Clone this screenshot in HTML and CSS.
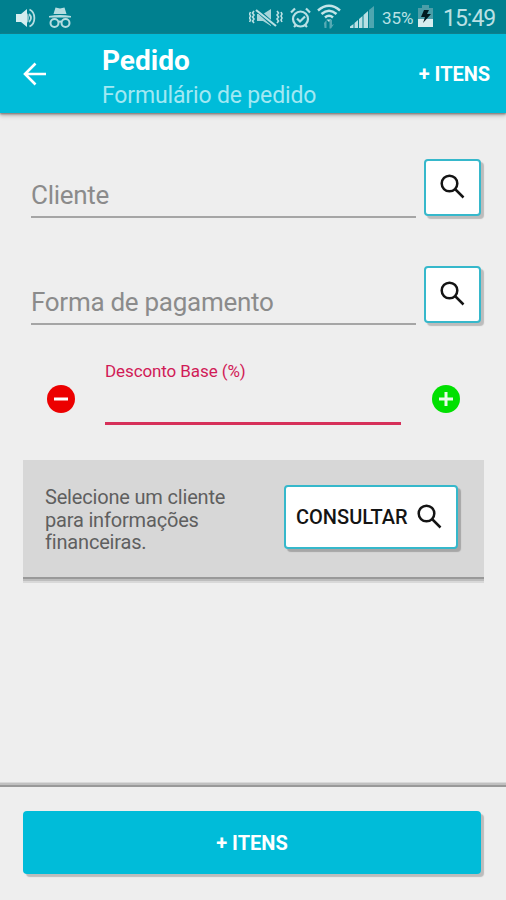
FILE: index.html
```html
<!DOCTYPE html>
<html lang="pt-BR">
<head>
<meta charset="utf-8">
<title>Pedido</title>
<link rel="stylesheet" href="styles.css">
</head>
<body>
<div class="statusbar">
  <svg class="i-sound" width="20" height="20" viewBox="0 0 20 20"><path fill="#d5edef" d="M0 6h5l6-5v18l-6-5H0z"/><path fill="#8fc9cf" d="M11 5q4 5 0 10z"/><path fill="none" stroke="#b5dde1" stroke-width="1.800" d="M13 6q4 4 0 8M13.500 1.500c6.500 3 6.500 14 0 17"/></svg>
  <svg class="i-incognito" width="22" height="22" viewBox="0 0 22 22"><path fill="#b5dde1" d="M6.500 0.500l4.500 1 4.500-1L17.500 7h-13zM0 9q11-2 22 0v1.500H0z"/><g fill="none" stroke="#b5dde1" stroke-width="2"><circle cx="5.500" cy="16" r="4"/><circle cx="16.500" cy="16" r="4"/><path d="M9.500 15q1.500-1 3 0"/></g></svg>
  <span class="grow"></span>
  <svg class="i-mute" width="34" height="20" viewBox="0 0 34 20"><path fill="#a7d5da" d="M8 6h6l8-5v17l-8-5H8z"/><path stroke="#00808f" stroke-width="4" d="M7 1l20 18"/><g fill="none" stroke="#b9e0e4" stroke-width="1.600"><path stroke-width="2.200" d="M7 2l20 16"/><path d="M5 3L3.500 5 5 7 3.500 9 5 11 3.500 13 5 15M1.500 4L.5 6l1 2-1 2 1 2-1 2M28 3l1.500 2L28 7l1.500 2L28 11l1.500 2L28 15M32 4l1 2-1 2 1 2-1 2 1 2"/></g></svg>
  <svg class="i-alarm" width="21" height="22" viewBox="0 0 21 22"><g fill="none" stroke="#b9e0e4" stroke-width="2.200"><circle cx="10.500" cy="13" r="7.500"/><path d="M7 12.500l3 3 5-5M1 6.500l4-4M20 6.500l-4-4M4 21l2-2M17 21l-2-2"/></g></svg>
  <svg class="i-wifi" width="24" height="25" viewBox="0 0 24 25"><g fill="none" stroke="#c3e5e8" stroke-width="2.500"><path d="M1 6.500Q12-3 23 6.500M4.500 10Q12 3.500 19.500 10M8 13.500q4-3.500 8 0"/></g><path fill="#c3e5e8" d="M9.500 15.500h5L12 18z"/><path fill="#55aab4" d="M7 19l2.500-3v8h-2zM12.500 16H15v5l2-1-3 4.500h-1.500z"/></svg>
  <svg class="i-signal" width="24" height="22" viewBox="0 0 24 22"><path fill="#b9e0e4" d="M0 20.500L3.500 18v4H0zM4.500 17L8 14v8H4.500zM9 13l3.500-3v12H9zM13.500 9L18 5v17h-4.500z"/><path fill="#4ea6b0" d="M19 4l5-4v22h-5z"/></svg>
  <span class="percent">35%</span>
  <svg class="i-battery" width="15" height="22" viewBox="0 0 15 22"><path fill="#4b9ea8" d="M4 0h7v3h4v11H0V3h4z"/><path fill="#d8edef" d="M0 14h15v8H0z"/><path fill="#001b20" d="M6 5h5l-2 4h4L5 18l2-6H3z"/></svg>
  <span class="clock">15:49</span>
</div>
<header class="appbar">
  <svg class="back" width="24" height="24" viewBox="0 0 24 24"><path fill="none" stroke="#fff" stroke-width="2.600" d="M12.500 1.500L2 12l10.500 10.500M2 12h21"/></svg>
  <div class="titles">
    <h1>Pedido</h1>
    <p>Formulário de pedido</p>
  </div>
  <span class="action">+ ITENS</span>
</header>
<main>
  <div class="row">
    <div class="field"><span>Cliente</span></div>
    <button class="search"><svg width="25" height="25" viewBox="0 0 25 25"><g fill="none" stroke="#141414" stroke-width="2.500"><circle cx="9.500" cy="9.500" r="7.800"/><path d="M15 15l8.500 8.500"/></g></svg></button>
  </div>
  <div class="row">
    <div class="field"><span>Forma de pagamento</span></div>
    <button class="search"><svg width="25" height="25" viewBox="0 0 25 25"><g fill="none" stroke="#141414" stroke-width="2.500"><circle cx="9.500" cy="9.500" r="7.800"/><path d="M15 15l8.500 8.500"/></g></svg></button>
  </div>
  <div class="discount">
    <svg width="28" height="28" viewBox="0 0 28 28"><circle cx="14" cy="14" r="14" fill="#ec0000"/><path stroke="#fff" stroke-width="3" d="M7 14h14"/></svg>
    <div class="discount-field"><span>Desconto Base (%)</span></div>
    <svg width="28" height="28" viewBox="0 0 28 28"><circle cx="14" cy="14" r="14" fill="#00e000"/><path stroke="#e9fbe9" stroke-width="3" d="M7 14h14M14 7v14"/></svg>
  </div>
  <section class="card">
    <p>Selecione um cliente<br>para informações<br>financeiras.</p>
    <button class="consult"><span>CONSULTAR</span><svg width="25" height="25" viewBox="0 0 25 25"><g fill="none" stroke="#141414" stroke-width="2.500"><circle cx="9.500" cy="9.500" r="7.800"/><path d="M15 15l8.500 8.500"/></g></svg></button>
  </section>
</main>
<footer><button class="primary">+ ITENS</button></footer>
</body>
</html>
```
FILE: styles.css
```css
* { box-sizing: border-box; }
body {
  margin: 0;
  height: 900px;
  display: flex;
  flex-direction: column;
  overflow: hidden;
  background: #eee;
  font-family: Roboto, "Liberation Sans", sans-serif;
}
svg { display: block; flex: none; }
h1, p { margin: 0; }
button { font-family: inherit; padding: 0; }
.statusbar {
  height: 34px;
  flex: none;
  display: flex;
  align-items: flex-start;
  padding: 0 11px 0 16px;
  background: #00808f;
  color: #b9e0e4;
  white-space: nowrap;
}
.grow { flex: 1; }
.i-sound { margin-top: 8px; }
.i-incognito { margin: 7px 0 0 13px; }
.i-mute { margin: 8px 7px 0 0; }
.i-alarm { margin: 6px 6px 0 0; }
.i-wifi { margin: 4px 9px 0 0; }
.i-signal { margin: 6px 8px 0 0; }
.percent { width: 36px; font-size: 17px; line-height: 36px; }
.i-battery { margin: 5px 10px 0 0; }
.clock { width: 52px; font-size: 23px; line-height: 37px; letter-spacing: -1px; }
.appbar {
  height: 79px;
  flex: none;
  display: flex;
  align-items: center;
  padding: 0 16px 0 23px;
  background: #00bcd9;
  color: #fff;
  box-shadow: 0 1px 2px #80706c, 0 3px 4px #bbb;
  white-space: nowrap;
}
.titles { flex: 1; padding: 9px 0 0 55px; }
h1 { font-size: 28px; line-height: 34px; font-weight: 700; }
.titles p { font-size: 23px; line-height: 35px; color: #a2e8f3; letter-spacing: -0.15px; }
.action { font-size: 20px; font-weight: 700; letter-spacing: -0.05px; padding-top: 1px; }
main { flex: 1; padding: 46px 22px 0 23px; }
.row { display: flex; height: 57px; margin-bottom: 50px; padding-left: 8px; }
.field {
  width: 385px;
  height: 59px;
  display: flex;
  align-items: flex-end;
  padding-bottom: 5px;
  border-bottom: 2px solid #a5a5a5;
  color: #8b8b8b;
  font-size: 26px;
  line-height: 32px;
  letter-spacing: -0.28px;
  white-space: nowrap;
}
.search {
  width: 57px;
  height: 57px;
  margin-left: 8px;
  display: flex;
  align-items: center;
  justify-content: center;
  background: #fff;
  border: 2px solid #36b8cb;
  border-radius: 4px;
  box-shadow: 3px 3px 1px #bcbcbc;
}
.search svg { margin-top: -2px; }
.discount {
  display: flex;
  align-items: flex-start;
  height: 68px;
  margin-top: -15px;
  padding: 0 24px;
}
.discount svg { margin-top: 27px; }
.discount-field {
  flex: 1;
  height: 67px;
  margin: 0 31px 0 30px;
  padding-top: 2px;
  color: #d11b57;
  border-bottom: 3px solid #d63059;
  font-size: 17px;
  line-height: 23px;
  letter-spacing: -0.1px;
  white-space: nowrap;
}
.card {
  height: 117px;
  margin-top: 34px;
  display: flex;
  align-items: flex-start;
  justify-content: space-between;
  padding: 25px 26px 0 22px;
  background: #d7d7d7;
  box-shadow: 0 2px 0 #999, 0 4px 0 #bdbdbd, 0 6px 0 #d8d8d8;
}
.card p { font-size: 20px; line-height: 22.500px; padding-top: 1px; color: #5f5f5f; letter-spacing: -0.18px; white-space: nowrap; }
.consult {
  width: 174px;
  height: 64px;
  display: flex;
  align-items: center;
  padding-left: 10px;
  background: #fff;
  border: 2px solid #36b8cb;
  border-radius: 4px;
  box-shadow: 3px 3px 1px #a6a6a6;
  font-size: 20px;
  font-weight: 500;
  color: #141414;
}
.consult svg { margin: -2px 0 0 9px; }
footer {
  height: 113px;
  flex: none;
  padding: 24px 25px 0 23px;
  background: #eee;
  box-shadow: 0 -2px 0 #999, 0 -4px 0 #c0c0c0, 0 -5px 0 #d8d8d8;
}
.primary {
  display: block;
  width: 458px;
  height: 63px;
  border: 0;
  border-radius: 4px;
  background: #00bcd9;
  color: #fff;
  font-size: 20px;
  font-weight: 700;
  box-shadow: 3px 3px 1px #bcbcbc;
}
```
